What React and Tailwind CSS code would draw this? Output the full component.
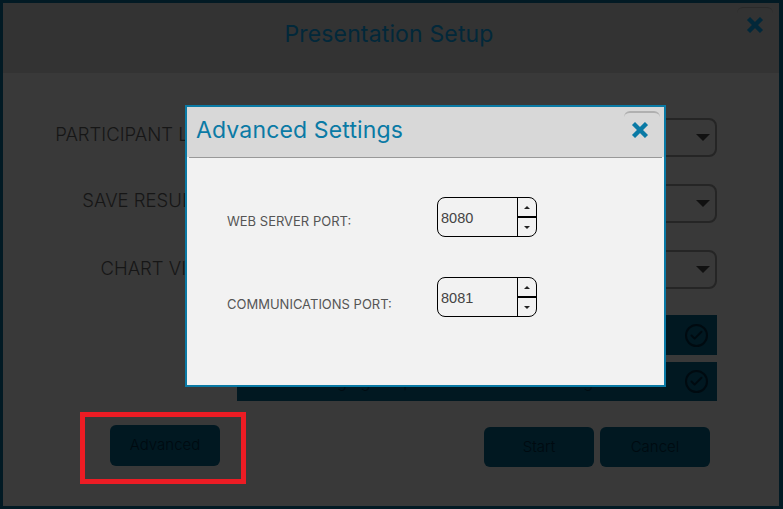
import { X, Check } from "lucide-react";

function Dropdown({ className }) {
  return (
    <div className={"flex h-[39px] w-[480px] items-center justify-end rounded-lg border-2 border-[#252525] pr-[5px] " + className}>
      <div className="h-0 w-0 border-x-[7px] border-t-[7px] border-x-transparent border-t-[#111]" />
    </div>
  );
}

function FormRow({ label, className, labelClass }) {
  return (
    <div className={"flex items-center " + className}>
      <span className={"w-[234px] pr-[20px] text-right text-[18.5px] font-light whitespace-nowrap text-[#161616] " + labelClass}>{label}</span>
      <Dropdown />
    </div>
  );
}

function CheckBar({ text, className }) {
  return (
    <div className={"ml-[234px] flex w-[480px] items-center justify-between bg-[#011821] pl-[13px] pr-[9px] " + className}>
      <span className="text-[16.5px] font-light whitespace-nowrap text-[#010c12]">{text}</span>
      <span className="flex h-[23px] w-[23px] items-center justify-center rounded-full border-2 border-[#000a10]">
        <Check size={15} strokeWidth={3} className="text-[#000a10]" />
      </span>
    </div>
  );
}

function DarkButton({ children, className = "" }) {
  return (
    <button className={"flex h-10 w-[110px] items-center justify-center rounded-md bg-[#011821] text-[15px] font-light text-[#000a10] " + className}>
      {children}
    </button>
  );
}

function PortField({ value }) {
  return (
    <div className="flex h-10 w-[100px] overflow-hidden rounded-lg border border-black">
      <div className="flex flex-1 items-center pl-[3px] pt-1 font-['Liberation_Sans',sans-serif] text-[14.5px] text-[#444]">{value}</div>
      <div className="flex w-[19px] flex-col border-l border-black">
        <div className="flex flex-1 items-center justify-center border-b-2 border-black">
          <div className="h-0 w-0 border-x-[3px] border-b-[3px] border-x-transparent border-b-[#222]" />
        </div>
        <div className="flex flex-1 items-center justify-center">
          <div className="h-0 w-0 border-x-[3px] border-t-[3px] border-x-transparent border-t-[#222]" />
        </div>
      </div>
    </div>
  );
}

export default function App() {
  return (
    <div className="relative h-[509px] w-[783px] overflow-hidden border-[3px] border-r-4 border-[#021a24] bg-[#393939] font-['Inter',sans-serif]">
      <header className="relative flex h-[70px] items-center justify-center bg-[#333333] pb-[7px] pr-[4px]">
        <h1 className="text-[23px] font-normal tracking-[0.15px] text-[#02283a]">Presentation Setup</h1>
        <button className="absolute right-[6px] top-[4px] flex h-[34px] w-9 items-center justify-center rounded-t-md border-t border-[#2a2a2a]">
          <X size={26} strokeWidth={4} strokeLinecap="butt" className="text-[#02283a]" />
        </button>
      </header>

      <main className="flex flex-col pt-[45px]">
        <FormRow label="PARTICIPANT LIST" labelClass="-translate-y-[3px]" />
        <FormRow label="SAVE RESULTS" className="mt-[27px]" labelClass="-translate-y-[3px] -translate-x-[3px]" />
        <FormRow label="CHART VIEW" className="mt-[27px]" labelClass="-translate-y-[1px] -translate-x-[2px]" />
        <CheckBar text="Show Results" className="mt-[26px] h-10" />
        <CheckBar text="Allow Changing Responses While Answering" className="mt-[7px] h-[39px]" />
        <div className="mt-[24px] flex items-start pl-[107px]">
          <DarkButton className="h-[41px]">Advanced</DarkButton>
          <div className="ml-[264px] mt-[2px] flex gap-[6px]">
            <DarkButton>Start</DarkButton>
            <DarkButton>Cancel</DarkButton>
          </div>
        </div>
      </main>

      <div className="absolute left-[77px] top-[409px] h-[72px] w-[166px] border-[5px] border-[#ed1c24]" />

      <div className="absolute left-[182px] top-[102px] h-[282px] w-[481px] border-2 border-[#0a7aa5] bg-[#f2f2f2]">
        <div className="relative flex h-[50px] items-center bg-[#d8d8d8] pb-[4px] pl-[9px]">
          <h2 className="text-[23px] font-normal tracking-[0.15px] text-[#0a7aa5]">Advanced Settings</h2>
          <button className="absolute right-[4px] top-[4px] flex h-[36px] w-9 items-center justify-center rounded-t-md border-t-2 border-[#b0b0b0]">
            <X size={26} strokeWidth={4} strokeLinecap="butt" className="-translate-x-[2px] text-[#0a7aa5]" />
          </button>
        </div>
        <div className="mx-[2px] h-[1px] bg-[#999]" />
        <div className="flex flex-col pl-[40px] pt-[39px]">
          <div className="flex items-center">
            <span className="w-[210px] pt-[10px] text-[13px] font-normal text-[#555]">WEB SERVER PORT:</span>
            <PortField value="8080" />
          </div>
          <div className="mt-10 flex items-center">
            <span className="w-[210px] pt-[15px] text-[13px] font-normal text-[#555]">COMMUNICATIONS PORT:</span>
            <PortField value="8081" />
          </div>
        </div>
      </div>
    </div>
  );
}
